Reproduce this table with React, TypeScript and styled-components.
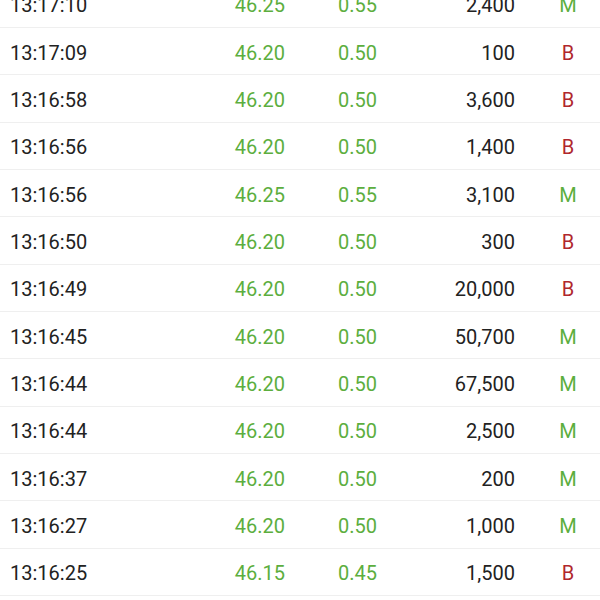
import React from "react";
import styled, { createGlobalStyle } from "styled-components";

const Global = createGlobalStyle`
  html, body { margin: 0; padding: 0; background: #ffffff; }
  body { font-family: Roboto, "Noto Sans", "Liberation Sans", sans-serif; }
`;

const Viewport = styled.div`
  width: 600px;
  height: 600px;
  overflow: hidden;
  background: #ffffff;
`;

const List = styled.div`
  margin-top: -19.33px;
`;

const Row = styled.div`
  display: grid;
  grid-template-columns: 150px 125px 92px 138px 1fr;
  align-items: center;
  box-sizing: border-box;
  height: 47.33px;
  padding: 3px 0 0 10px;
  border-bottom: 1px solid #efefef;
  font-size: 20px;
  line-height: 24px;
`;

const Time = styled.span`
  color: #222222;
`;

const Num = styled.span<{ $tone?: "up" | "plain" }>`
  text-align: right;
  color: ${(p) => (p.$tone === "up" ? "#5cae3e" : "#222222")};
`;

const Side = styled.span<{ $kind: "M" | "B" }>`
  padding-left: 21px;
  text-align: center;
  color: ${(p) => (p.$kind === "M" ? "#5cae3e" : "#b0272d")};
`;

type Trade = [string, string, string, string, "M" | "B"];

const trades: Trade[] = [
  ["13:17:10", "46.25", "0.55", "2,400", "M"],
  ["13:17:09", "46.20", "0.50", "100", "B"],
  ["13:16:58", "46.20", "0.50", "3,600", "B"],
  ["13:16:56", "46.20", "0.50", "1,400", "B"],
  ["13:16:56", "46.25", "0.55", "3,100", "M"],
  ["13:16:50", "46.20", "0.50", "300", "B"],
  ["13:16:49", "46.20", "0.50", "20,000", "B"],
  ["13:16:45", "46.20", "0.50", "50,700", "M"],
  ["13:16:44", "46.20", "0.50", "67,500", "M"],
  ["13:16:44", "46.20", "0.50", "2,500", "M"],
  ["13:16:37", "46.20", "0.50", "200", "M"],
  ["13:16:27", "46.20", "0.50", "1,000", "M"],
  ["13:16:25", "46.15", "0.45", "1,500", "B"],
];

export default function App() {
  return (
    <Viewport>
      <Global />
      <List>
        {trades.map((t, i) => (
          <Row key={i}>
            <Time>{t[0]}</Time>
            <Num $tone="up">{t[1]}</Num>
            <Num $tone="up">{t[2]}</Num>
            <Num>{t[3]}</Num>
            <Side $kind={t[4]}>{t[4]}</Side>
          </Row>
        ))}
      </List>
    </Viewport>
  );
}
